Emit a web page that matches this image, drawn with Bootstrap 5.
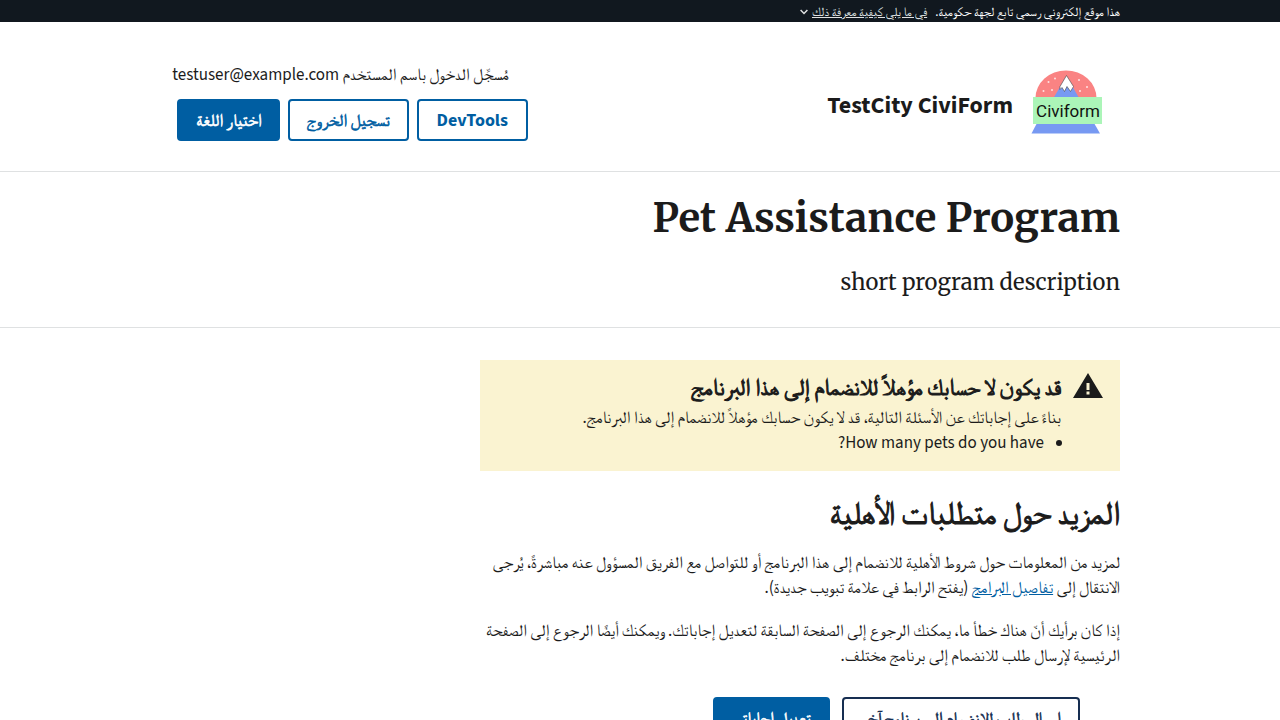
<!DOCTYPE html>
<html lang="ar" dir="rtl">
<head>
<meta charset="utf-8">
<meta name="viewport" content="width=device-width, initial-scale=1">
<title>Pet Assistance Program</title>
<link href="https://cdn.jsdelivr.net/npm/bootstrap@5.3.0/dist/css/bootstrap.min.css" rel="stylesheet">
<style>
body { font-family: "Source Sans 3", FreeSerif, "Noto Naskh Arabic", sans-serif; font-size: 17px; line-height: 25px; color: #1b1b1b; }
.wrap { max-width: 1024px; padding: 0 32px; }
.rule { border-bottom: 1px solid #dfe1e2; }
.gov-bar { background: #11181f; color: #fff; font-size: 13px; line-height: 20px; padding-top: 2px; }
.gov-bar .btn { color: #dfe1e2; font-size: 13px; line-height: 20px; }
.site-head { padding: 41px 0 30px; }
.brand-link { color: #1b1b1b; }
.brand-name { font-size: 24px; line-height: 32px; font-weight: 700; }
.account { width: 368px; }
.signed-in { padding-right: 19px; margin-bottom: 11px; }
/* Arabic headings and labels keep the regular cut and are thickened by a stroke */
.ar-bold { font-weight: 400; -webkit-text-stroke: 1px currentColor; }
.civ-btn { --bs-btn-padding-x: 17px; --bs-btn-padding-y: 0; --bs-btn-font-size: 17px; --bs-btn-border-width: 2px; --bs-btn-border-radius: 4px; height: 42px; line-height: 40px; white-space: nowrap; }
.civ-btn.ar-bold { -webkit-text-stroke-width: .6px; }
.civ-latin { --bs-btn-padding-x: 18px; --bs-btn-font-weight: 700; --bs-btn-font-size: 18px; }
.civ-line { color: #005ea2; border-color: #005ea2; background: #fff; }
.civ-solid { color: #fff; border-color: #005ea2; background: #005ea2; }
.civ-navy { color: #162e51; border-color: #162e51; background: #fff; }
.program-intro { padding: 20px 0 29px; }
.program-title { font-family: Merriweather, "Noto Serif", serif; font-size: 40px; line-height: 52px; font-weight: 700; margin-bottom: 22px; }
.program-sub { font-family: Merriweather, "Noto Serif", serif; font-size: 22px; line-height: 32px; }
.notice { background: #faf3d1; padding: 12px 16px 15px; gap: 11px; margin: 32px 0 21px; }
.notice h2 { font-size: 23px; line-height: 32px; margin-bottom: 2px; }
.notice ul { padding-right: 17px; }
.main-col h3 { font-size: 32px; line-height: 44px; margin-bottom: 15px; }
.main-col p { margin-bottom: 18px; }
.main-col .actions { gap: 12px; padding: 10px 40px 32px; }
.main-col a { color: #005ea2; }
</style>
</head>
<body>
<div class="gov-bar">
  <div class="wrap container-fluid d-flex gap-2">
    <span>هذا موقع إلكتروني رسمي تابع لجهة حكومية.</span>
    <button type="button" class="btn p-0 border-0 rounded-0 d-flex align-items-center gap-1"><u>في ما يلي كيفية معرفة ذلك</u>
      <svg width="8" height="6" viewBox="0 0 8 6" fill="none" stroke="currentColor" stroke-width="1.5" aria-hidden="true"><path d="M.6 1 4 4.500 7.400 1"/></svg></button>
  </div>
</div>
<header class="rule">
  <div class="wrap container-fluid">
    <div class="site-head d-flex justify-content-between">
      <a href="#" class="brand-link d-flex align-items-center text-decoration-none">
        <svg width="107" height="72" viewBox="0 0 107 72" role="img" aria-label="Civiform">
          <path d="M22.500 32a31 27 0 0 1 61 0z" fill="#fa8383"/>
          <path d="M22.500 32a30.500 27.500 0 0 1 61 0z" fill="#fa8383"/>
          <g fill="#ffe3e3"><circle cx="42" cy="12.500" r="1"/><circle cx="35.500" cy="16" r="1"/><circle cx="39" cy="24" r="1"/><circle cx="30.500" cy="25" r="1"/><circle cx="66" cy="14" r="1"/><circle cx="74" cy="21" r="1"/><circle cx="67" cy="25" r="1"/></g>
          <path d="M40.500 32 53.500 10 66 32z" fill="#7799f2"/>
          <path d="M47 20.500 53.500 9.500 60.500 20.500l-3 5-3.500-5-2.500 5-2.500-4-2 2z" fill="#fff" stroke="#444" stroke-width=".6"/>
          <path d="M24 57h57l6 10.500H18.500z" fill="#7799f2"/>
          <path d="M20 31h69v27H20z" fill="#abf5b8"/>
          <text x="55" y="51" text-anchor="middle" direction="ltr" font-family="Roboto" font-size="17" fill="#111">Civiform</text>
        </svg>
        <span class="brand-name mt-2">TestCity CiviForm</span>
      </a>
      <div class="account">
        <div class="signed-in">مُسجَّل الدخول باسم المستخدم testuser@example.com</div>
        <div class="d-flex gap-2"><button type="button" class="btn civ-btn civ-latin civ-line">DevTools</button><button type="button" class="btn civ-btn ar-bold civ-line">تسجيل الخروج</button><button type="button" class="btn civ-btn ar-bold civ-solid">اختيار اللغة</button></div>
      </div>
    </div>
  </div>
</header>
<section class="rule">
  <div class="wrap container-fluid">
    <div class="program-intro">
      <h1 class="program-title">Pet Assistance Program</h1>
      <p class="program-sub mb-0">short program description</p>
    </div>
  </div>
</section>
<main class="wrap container-fluid">
  <div class="row g-0">
    <div class="main-col col-md-8">
      <div class="notice d-flex align-items-start">
        <svg class="flex-shrink-0" width="32" height="28" viewBox="0 0 32 28" aria-hidden="true"><path fill="#1b1b1b" fill-rule="evenodd" d="M16 1 31 26H1zM14.500 11v7h3v-7zm0 8.500v3h3v-3z"/></svg>
        <div>
          <h2 class="ar-bold">قد يكون لا حسابك مؤهلاً للانضمام إلى هذا البرنامج</h2>
          <div>بناءً على إجاباتك عن الأسئلة التالية، قد لا يكون حسابك مؤهلاً للانضمام إلى هذا البرنامج.</div>
          <ul class="mb-0"><li>How many pets do you have?</li></ul>
        </div>
      </div>
      <h3 class="ar-bold">المزيد حول متطلبات الأهلية</h3>
      <p>لمزيد من المعلومات حول شروط الأهلية للانضمام إلى هذا البرنامج أو للتواصل مع الفريق المسؤول عنه مباشرةً، يُرجى الانتقال إلى <a href="#">تفاصيل البرامج</a> (يفتح الرابط في علامة تبويب جديدة).</p>
      <p>إذا كان برأيك أنّ هناك خطأ ما، يمكنك الرجوع إلى الصفحة السابقة لتعديل إجاباتك. ويمكنك أيضًا الرجوع إلى الصفحة الرئيسية لإرسال طلب للانضمام إلى برنامج مختلف.</p>
      <div class="actions d-flex">
        <button type="button" class="btn civ-btn ar-bold civ-navy">إرسال طلب للانضمام إلى برنامج آخر</button>
        <button type="button" class="btn civ-btn ar-bold civ-solid">تعديل إجاباتي</button>
      </div>
    </div>
  </div>
</main>
<script src="https://cdn.jsdelivr.net/npm/bootstrap@5.3.0/dist/js/bootstrap.bundle.min.js"></script>
</body>
</html>
